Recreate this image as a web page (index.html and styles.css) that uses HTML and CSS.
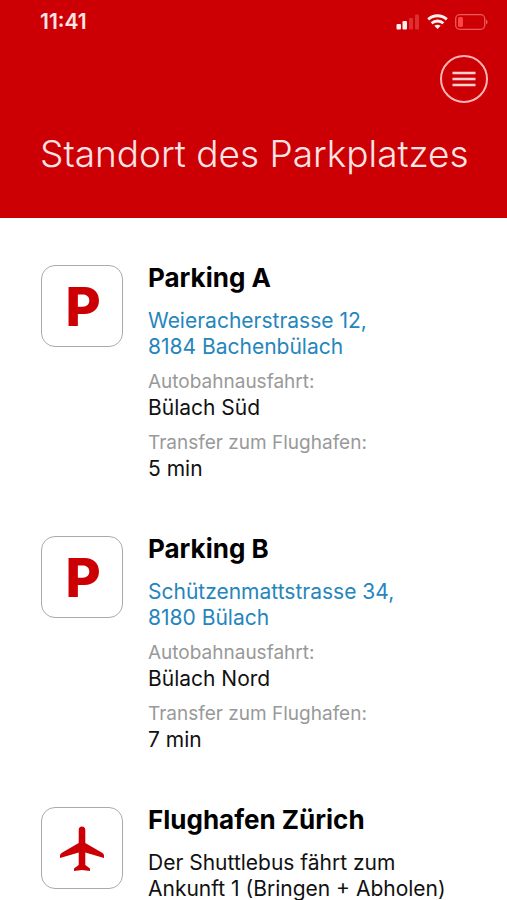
FILE: index.html
```html
<!DOCTYPE html>
<html lang="de">
<head>
<meta charset="utf-8">
<meta name="viewport" content="width=device-width, initial-scale=1">
<title>Standort des Parkplatzes</title>
<link rel="stylesheet" href="styles.css">
</head>
<body>
<header class="header">
  <div class="status">
    <time class="clock">11:41</time>
    <div class="indicators">
      <svg width="24" height="16" viewBox="0 0 24 16" aria-hidden="true">
        <rect x="0.5" y="10" width="4.500" height="5.500" rx="1" fill="#fff0f0"/>
        <rect x="6.500" y="7" width="4.500" height="8.500" rx="1" fill="#fff0f0"/>
        <rect x="13" y="4" width="4" height="11.500" rx="1" fill="#dc3030"/>
        <rect x="19" y="0.500" width="4" height="15" rx="1" fill="#dc3030"/>
      </svg>
      <svg width="21" height="16" viewBox="0 0 21 16" fill="none" stroke="#fff0f0" stroke-width="2.800" aria-hidden="true">
        <path d="M1.200 5.400C6.500.5 14.500.5 19.800 5.400"/>
        <path d="M4.600 9.300C8 6.200 13 6.200 16.400 9.300"/>
        <path d="M10.500 15 7.300 11.800C9.200 10.300 11.800 10.300 13.700 11.800Z" fill="#fff0f0" stroke="none"/>
      </svg>
      <svg width="33" height="16" viewBox="0 0 33 16" aria-hidden="true">
        <rect x="0.700" y="0.700" width="29" height="14.600" rx="4" fill="none" stroke="#ea5a5a" stroke-width="1.300"/>
        <rect x="3" y="3" width="5" height="10" rx="1.500" fill="#f44"/>
        <path d="M31 5.500c2 .8 2 4.200 0 5Z" fill="#ea5a5a"/>
      </svg>
    </div>
  </div>
  <button class="menu" type="button" aria-label="Menü">
    <svg width="24" height="16" viewBox="0 0 24 16" stroke="#ffd0d0" stroke-width="2.400" aria-hidden="true">
      <path d="M0.500 2h23M0.500 8h23M0.500 14h23"/>
    </svg>
  </button>
  <h1 class="title">Standort des Parkplatzes</h1>
</header>
<main class="places">
  <section class="place">
    <div class="tile letter" aria-hidden="true">P</div>
    <div class="info">
      <h2>Parking A</h2>
      <p><a href="#parking-a">Weieracherstrasse 12,<br>8184 Bachenbülach</a></p>
      <dl>
        <div><dt>Autobahnausfahrt:</dt><dd>Bülach Süd</dd></div>
        <div><dt>Transfer zum Flughafen:</dt><dd>5 min</dd></div>
      </dl>
    </div>
  </section>
  <section class="place">
    <div class="tile letter" aria-hidden="true">P</div>
    <div class="info">
      <h2>Parking B</h2>
      <p><a href="#parking-b">Schützenmattstrasse 34,<br>8180 Bülach</a></p>
      <dl>
        <div><dt>Autobahnausfahrt:</dt><dd>Bülach Nord</dd></div>
        <div><dt>Transfer zum Flughafen:</dt><dd>7 min</dd></div>
      </dl>
    </div>
  </section>
  <section class="place">
    <div class="tile">
      <svg width="44" height="46" viewBox="0 0 44 46" fill="#cc0004" aria-hidden="true">
        <path d="M22 1.500C20 1.500 18.700 3 18.700 5V18L1.500 28Q0 29 0 30.500V33L18.700 27.500V40L14 43.500V46L22 45 30 46V43.500L25.300 40V27.500L44 33V30.500Q44 29 42.500 28L25.300 18V5C25.300 3 24 1.500 22 1.500Z"/>
      </svg>
    </div>
    <div class="info">
      <h2>Flughafen Zürich</h2>
      <p>Der Shuttlebus fährt zum<br>Ankunft 1 (Bringen + Abholen)</p>
    </div>
  </section>
</main>
</body>
</html>
```
FILE: styles.css
```css
* {
  box-sizing: border-box;
}

body {
  margin: 0;
  background: #fff;
  color: #111;
  font-family: Inter, "Liberation Sans", sans-serif;
  font-size: 21px;
  line-height: 26px;
}

h1, h2, p, dl, dd {
  margin: 0;
}

.header {
  display: flex;
  flex-direction: column;
  padding: 9px 19px 40px 40px;
  background: #cc0004;
  color: #ffe4e4;
}

.status {
  display: flex;
  align-items: center;
  justify-content: space-between;
}

.clock {
  font-size: 21px;
  font-weight: 600;
}

.indicators {
  display: flex;
  gap: 7px;
}

.menu {
  display: flex;
  align-items: center;
  justify-content: center;
  align-self: flex-end;
  width: 48px;
  height: 48px;
  margin: 20px 0 27px;
  padding: 0;
  border: 2px solid #ffb4b4;
  border-radius: 50%;
  background: none;
}

.title {
  font-size: 37px;
  font-weight: 300;
  line-height: 48px;
  white-space: nowrap;
}

.places {
  display: flex;
  flex-direction: column;
  gap: 51px;
  padding: 44px 18px 44px 41px;
}

.place {
  display: flex;
  align-items: flex-start;
  gap: 25px;
}

.tile {
  display: flex;
  flex: none;
  align-items: center;
  justify-content: center;
  width: 82px;
  height: 82px;
  margin-top: 3px;
  border: 1px solid #aaa;
  border-radius: 14px;
}

.letter {
  padding: 2px 0 0 2px;
  color: #cc0004;
  font-size: 54px;
  font-weight: 800;
}

.info {
  display: flex;
  flex-direction: column;
  gap: 9px;
}

.info h2 {
  margin-bottom: 5px;
  color: #000;
  font-size: 26px;
  font-weight: 700;
  line-height: 32px;
}

.info a {
  color: #2585bd;
  text-decoration: none;
}

.info dl {
  display: flex;
  flex-direction: column;
  gap: 9px;
}

.info dt {
  color: #999;
  font-size: 19px;
}
```
